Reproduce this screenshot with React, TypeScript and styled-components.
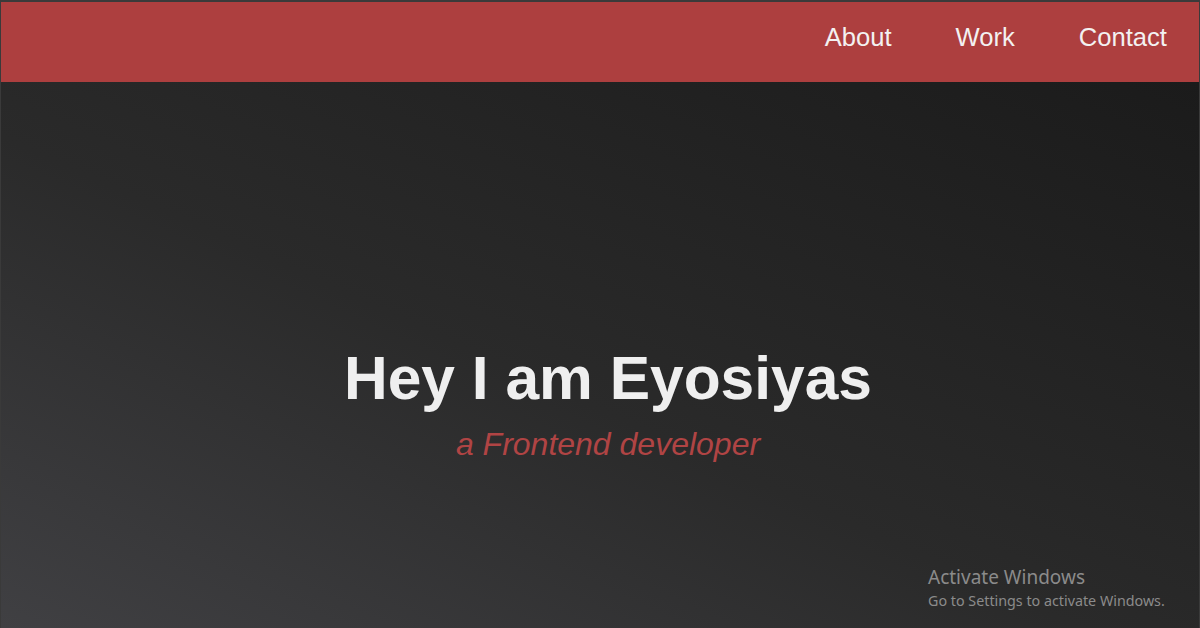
import React from "react";
import styled, { createGlobalStyle } from "styled-components";

const GlobalStyle = createGlobalStyle`
  html, body {
    margin: 0;
    padding: 0;
    background: #3a3a3a;
  }
  * { box-sizing: border-box; }
`;

const Page = styled.div`
  position: relative;
  display: flex;
  flex-direction: column;
  height: 628px;
  padding: 2px 1px 0 1px;
  overflow: hidden;
  font-family: "Liberation Sans", Arial, sans-serif;
`;

const Header = styled.header`
  display: flex;
  justify-content: flex-end;
  align-items: center;
  height: 80px;
  background: #ad3f3f;
`;

const NavLink = styled.a`
  padding: 0 32px;
  margin-top: -10px;
  font-size: 25.6px;
  color: #f3f1f1;
  text-decoration: none;
  cursor: pointer;
`;

const Hero = styled.main`
  flex: 1;
  display: flex;
  flex-direction: column;
  align-items: center;
  padding-top: 261px;
  padding-left: 16px;
  background: linear-gradient(to top right, #404043 0%, #2a2a2a 45%, #1b1b1b 100%);
`;

const Title = styled.h1`
  margin: 0;
  font-size: 60.5px;
  font-weight: 700;
  line-height: 70px;
  color: #efefef;
`;

const Subtitle = styled.p`
  margin: 10px 0 0;
  font-size: 32px;
  font-style: italic;
  line-height: 42px;
  color: #b04444;
`;

const Watermark = styled.div`
  position: absolute;
  left: 928px;
  top: 565px;
  font-family: "Noto Sans", "Open Sans", sans-serif;
  color: #8b8b8b;
`;

const WatermarkTitle = styled.div`
  font-size: 19px;
  line-height: 25px;
`;

const WatermarkText = styled.div`
  font-size: 14.3px;
  line-height: 21px;
`;

export default function App() {
  return (
    <>
      <GlobalStyle />
      <Page>
        <Header>
          <NavLink>About</NavLink>
          <NavLink>Work</NavLink>
          <NavLink>Contact</NavLink>
        </Header>
        <Hero>
          <Title>Hey I am Eyosiyas</Title>
          <Subtitle>a Frontend developer</Subtitle>
        </Hero>
        <Watermark>
          <WatermarkTitle>Activate Windows</WatermarkTitle>
          <WatermarkText>Go to Settings to activate Windows.</WatermarkText>
        </Watermark>
      </Page>
    </>
  );
}
